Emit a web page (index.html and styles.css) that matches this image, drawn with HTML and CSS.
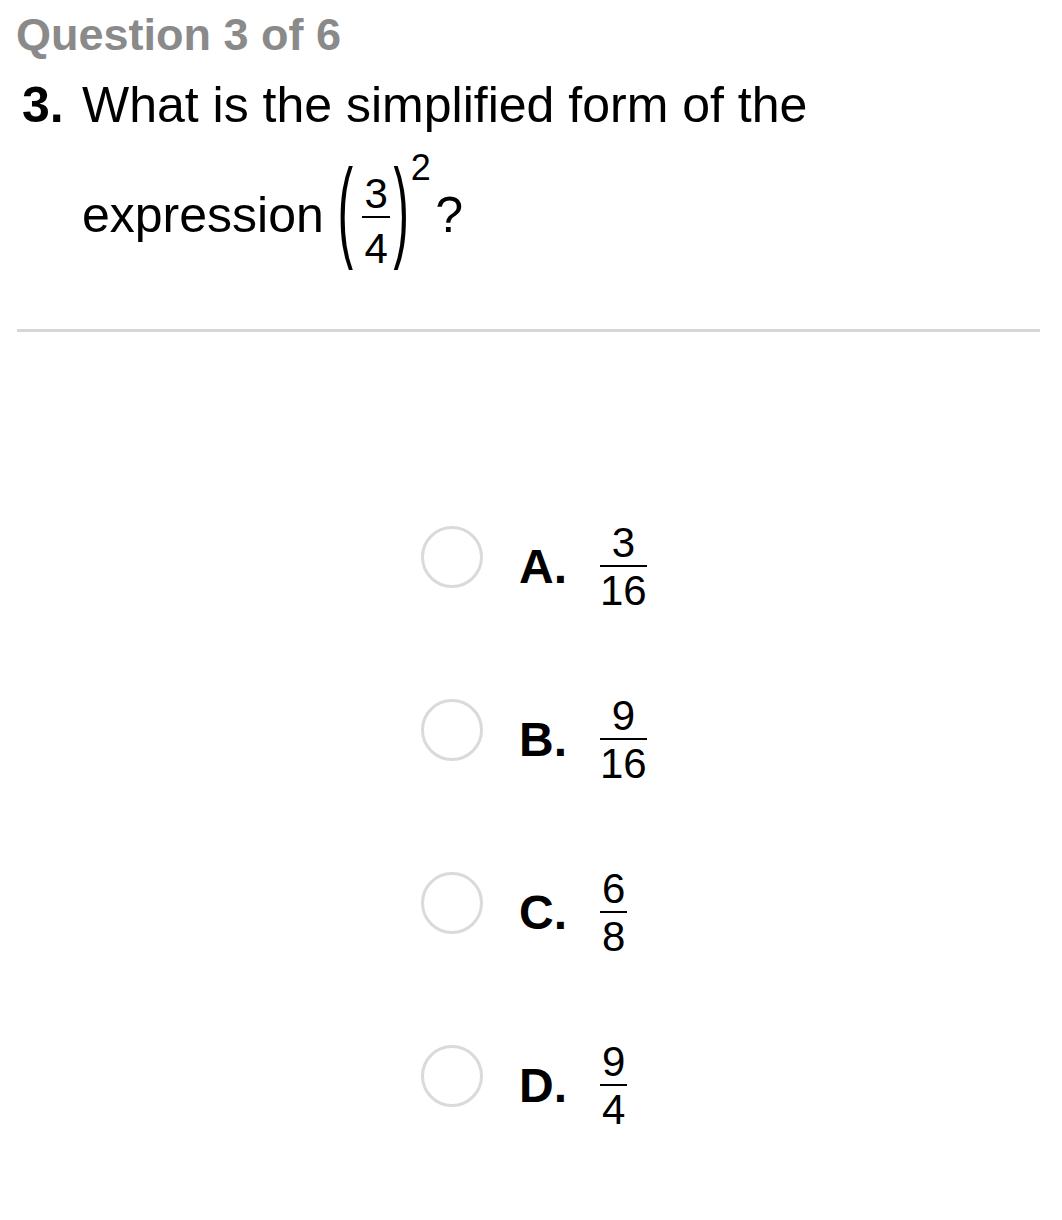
FILE: index.html
```html
<!DOCTYPE html>
<html lang="en">
<head>
<meta charset="utf-8">
<title>Question 3 of 6</title>
<link rel="stylesheet" href="styles.css">
</head>
<body>
<div class="page">
  <div class="q-header">Question 3 of 6</div>
  <div class="q-row">
    <span class="q-num">3.</span>
    <div class="q-text">What is the simplified form of the expression <span class="math"><span class="paren">(</span><span class="frac frac-q"><span class="num">3</span><span class="den">4</span></span><span class="paren paren-r">)</span><span class="exp">2</span></span><span class="qmark">?</span></div>
  </div>
  <hr class="divider">
  <div class="options">
    <div class="option">
      <span class="radio"></span>
      <span class="opt-label">A.</span>
      <span class="frac frac-o"><span class="num">3</span><span class="den">16</span></span>
    </div>
    <div class="option">
      <span class="radio"></span>
      <span class="opt-label">B.</span>
      <span class="frac frac-o"><span class="num">9</span><span class="den">16</span></span>
    </div>
    <div class="option">
      <span class="radio"></span>
      <span class="opt-label">C.</span>
      <span class="frac frac-o"><span class="num">6</span><span class="den">8</span></span>
    </div>
    <div class="option">
      <span class="radio"></span>
      <span class="opt-label">D.</span>
      <span class="frac frac-o"><span class="num">9</span><span class="den">4</span></span>
    </div>
  </div>
</div>
</body>
</html>
```

FILE: styles.css
```css
html, body {
  margin: 0;
  padding: 0;
  background: #ffffff;
}

.page {
  font-family: "Liberation Sans", Arial, sans-serif;
  color: #000000;
  width: 1062px;
}

.q-header {
  font-size: 45px;
  font-weight: bold;
  line-height: 52px;
  color: #8a8a8a;
  padding: 9px 0 0 16px;
}

.q-row {
  display: flex;
  margin-top: 14px;
  padding-left: 22px;
  padding-right: 22px;
  font-size: 50px;
  line-height: 60px;
}

.q-num {
  font-weight: bold;
  width: 60px;
  flex: none;
}

.q-text {
  flex: 1;
}

.math {
  display: inline-flex;
  align-items: center;
  height: 105px;
  margin: 30px 0 33px 0;
  vertical-align: middle;
}

.paren {
  display: block;
  font-size: 46px;
  line-height: 46px;
  transform-origin: 50% 27px;
  transform: translateY(-4px) scaleY(2.43);
}

.paren-r {
  margin-left: 3px;
}

.frac {
  display: inline-flex;
  flex-direction: column;
  align-items: stretch;
  text-align: center;
}

.frac-q {
  font-size: 42px;
  margin-left: 9px;
  margin-top: 7px;
}

.frac-q .num {
  line-height: 42px;
  padding: 0 2.5px 1.5px;
  border-bottom: 2px solid #000;
}

.frac-q .den {
  line-height: 42px;
  padding-top: 9.5px;
}

.exp {
  align-self: flex-start;
  font-size: 36px;
  line-height: 36px;
  margin-top: -15.5px;
  margin-left: 2px;
}

.qmark {
  margin-left: 4.5px;
}

.divider {
  border: 0;
  height: 3px;
  background: #d6d6d6;
  margin: 26px 22px 0 17px;
}

.options {
  display: flex;
  flex-direction: column;
  align-items: flex-start;
  gap: 83px;
  padding-left: 421px;
  margin-top: 190px;
}

.option {
  display: flex;
  align-items: center;
}

.radio {
  width: 62px;
  height: 62px;
  box-sizing: border-box;
  border: 3px solid #dadada;
  border-radius: 50%;
  margin-bottom: 20px;
  flex: none;
}

.opt-label {
  font-size: 48px;
  line-height: 48px;
  font-weight: bold;
  width: 48px;
  margin-left: 36px;
}

.frac-o {
  font-size: 42px;
  margin-left: 33px;
}

.frac-o .num {
  line-height: 42px;
  padding: 0 2px 1px;
  border-bottom: 2px solid #000;
}

.frac-o .den {
  line-height: 42px;
  padding-top: 3px;
}
```
